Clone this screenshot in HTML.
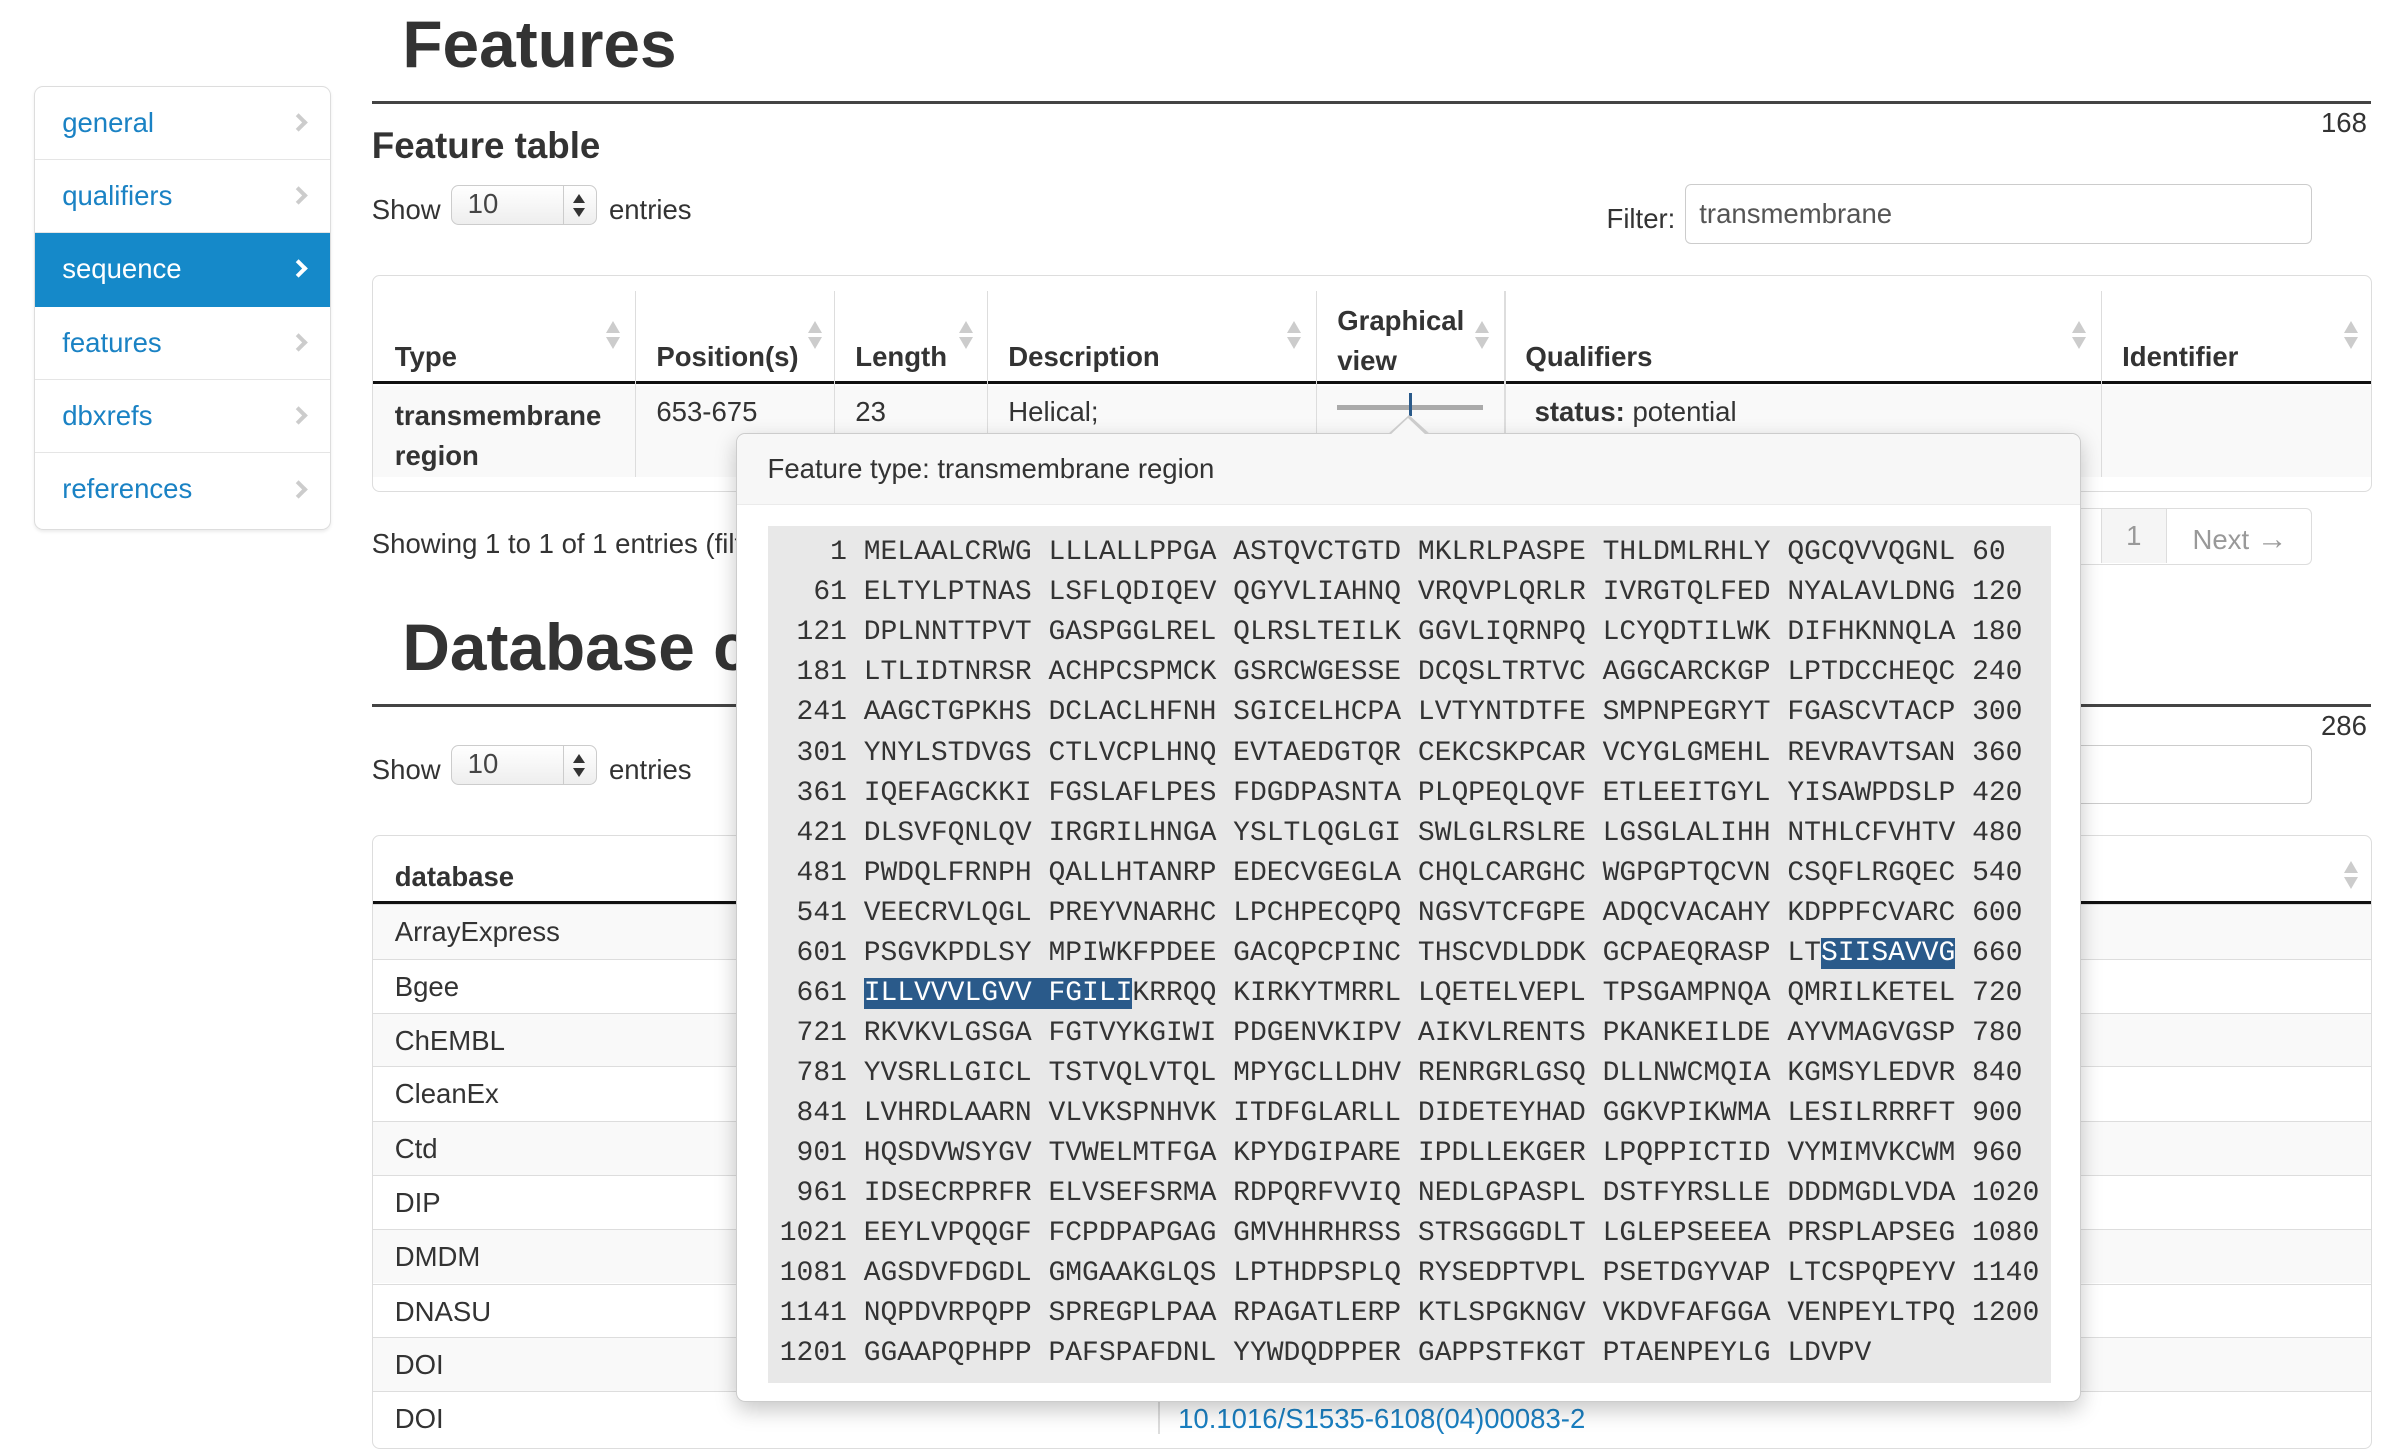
<!DOCTYPE html>
<html><head><meta charset="utf-8"><style>
html,body{margin:0;padding:0;background:#fff;}
body{width:2398px;height:1440px;overflow:hidden;position:relative;}
#z{zoom:1.530;position:absolute;left:0;top:0;width:1568px;height:942px;font-family:"Liberation Sans",Arial,sans-serif;color:#333;font-size:18px;}
.a{position:absolute;}
.nav{left:22px;top:56px;width:193px;height:289px;border:1px solid #ddd;border-radius:6px;box-shadow:0 1px 2px rgba(0,0,0,.08);overflow:hidden;background:#fff;}
.nav div{height:47.3px;border-bottom:1px solid #e5e5e5;position:relative;color:#1a82c4;font-size:18px;line-height:47px;padding-left:18px;}
.nav div:last-child{border-bottom:none}
.nav div.act{background:#1589c9;color:#fff;border-bottom-color:#1589c9}
.nav div:after{content:"";position:absolute;right:16px;top:19px;width:6px;height:6px;border-right:3px solid #ccc;border-top:3px solid #ccc;transform:rotate(45deg);}
.nav div.act:after{border-color:#fff}
h1{margin:0;font-size:43px;font-weight:bold;color:#333;position:absolute;}
.hr{position:absolute;height:2px;background:#444;}
.sel{position:absolute;width:94px;height:25px;border:1px solid #ccc;border-radius:5px;background:linear-gradient(#fff,#eee);font-size:18px;line-height:24px;}
.sel span{position:absolute;left:10px;top:0;color:#444}
.sel i{position:absolute;right:0;top:0;width:21px;height:25px;border-left:1px solid #ccc;}
.sel i:before{content:"";position:absolute;left:6px;top:5px;border:4px solid transparent;border-bottom:6px solid #333;border-top:none;}
.sel i:after{content:"";position:absolute;left:6px;top:14px;border:4px solid transparent;border-top:6px solid #333;border-bottom:none;}
.inp{position:absolute;border:1px solid #ccc;border-radius:4px;background:#fff;}
.box{position:absolute;border:1px solid #ddd;border-radius:5px;background:#fff;}
.th{position:absolute;font-weight:bold;font-size:18px;}
.vl{position:absolute;width:1px;background:#ddd;}
.sort{position:absolute;width:10px;height:20px;}
.sort:before{content:"";position:absolute;left:0;top:0;border:5px solid transparent;border-bottom:8px solid #ccc;border-top:none;}
.sort:after{content:"";position:absolute;left:0;top:10px;border:5px solid transparent;border-top:8px solid #ccc;border-bottom:none;}
.row{position:absolute;left:244px;width:1306px;height:35px;border-top:1px solid #ddd;font-size:18px;line-height:35px;}
.row span{padding-left:14px}
.pop{position:absolute;left:481px;top:283px;width:878px;height:632px;border:1px solid #ccc;border-radius:6px;background:#fff;box-shadow:0 5px 14px rgba(0,0,0,.22);}
.ph{height:46px;background:#f7f7f7;border-bottom:1px solid #ebebeb;border-radius:6px 6px 0 0;font-size:18px;line-height:46px;padding-left:20px;}
pre{position:absolute;left:20px;top:60px;width:839px;height:560px;margin:0;background:#e8e8e8;font-family:"Liberation Mono","Courier New",monospace;font-size:18.3px;line-height:26.15px;color:#333;padding:5px 0 0 8px;box-sizing:border-box;}
pre b{font-weight:normal;background:#2a5a8a;color:#fff;}
</style></head><body><div id="z">

<div class="a nav">
<div>general</div><div>qualifiers</div><div class="act">sequence</div><div>features</div><div>dbxrefs</div><div>references</div>
</div>

<h1 style="left:263px;top:4px;">Features</h1>
<div class="hr" style="left:243px;top:66px;width:1307px;"></div>
<div class="a" style="left:1517px;top:70px;">168</div>
<div class="a" style="left:243px;top:82px;font-size:24px;font-weight:bold;">Feature table</div>
<div class="a" style="left:243px;top:127px;">Show</div>
<div class="sel" style="left:295px;top:121px;"><span>10</span><i></i></div>
<div class="a" style="left:398px;top:127px;">entries</div>
<div class="a" style="left:1050px;top:133px;">Filter:</div>
<div class="inp" style="left:1101px;top:120px;width:409px;height:38px;"><span style="position:absolute;left:9px;top:9px;color:#555">transmembrane</span></div>

<div class="box" style="left:243px;top:180px;width:1306px;height:140px;"></div>
<div class="a" style="left:244px;top:252px;width:1306px;height:60px;background:#f9f9f9;"></div>
<div class="a" style="left:244px;top:249px;width:1306px;height:2px;background:#111;"></div>
<div class="vl" style="left:415px;top:190px;height:122px;"></div>
<div class="vl" style="left:545px;top:190px;height:122px;"></div>
<div class="vl" style="left:645px;top:190px;height:122px;"></div>
<div class="vl" style="left:860px;top:190px;height:122px;"></div>
<div class="vl" style="left:983px;top:190px;height:122px;"></div>
<div class="vl" style="left:1373px;top:190px;height:122px;"></div>
<div class="th" style="left:258px;top:223px;">Type</div>
<div class="th" style="left:429px;top:223px;">Position(s)</div>
<div class="th" style="left:559px;top:223px;">Length</div>
<div class="th" style="left:659px;top:223px;">Description</div>
<div class="th" style="left:874px;top:197px;line-height:26px;">Graphical<br>view</div>
<div class="th" style="left:997px;top:223px;">Qualifiers</div>
<div class="th" style="left:1387px;top:223px;">Identifier</div>
<div class="sort" style="left:396px;top:210px;"></div>
<div class="sort" style="left:528px;top:210px;"></div>
<div class="sort" style="left:627px;top:210px;"></div>
<div class="sort" style="left:841px;top:210px;"></div>
<div class="sort" style="left:964px;top:210px;"></div>
<div class="sort" style="left:1354px;top:210px;"></div>
<div class="sort" style="left:1532px;top:210px;"></div>
<div class="a" style="left:258px;top:259px;font-weight:bold;line-height:26px;">transmembrane<br>region</div>
<div class="a" style="left:429px;top:259px;">653-675</div>
<div class="a" style="left:559px;top:259px;">23</div>
<div class="a" style="left:659px;top:259px;">Helical;</div>
<div class="a" style="left:874px;top:265px;width:95px;height:3px;background:#aaa;"></div>
<div class="a" style="left:921px;top:257px;width:2px;height:15px;background:#2a5a8a;"></div>
<div class="a" style="left:1003px;top:259px;"><b>status:</b> potential</div>

<div class="a" style="left:243px;top:345px;">Showing 1 to 1 of 1 entries (filtered from 168 total entries)</div>
<div class="box" style="left:1330px;top:332px;width:180px;height:36px;border-radius:4px;"></div>
<div class="a" style="left:1373px;top:333px;width:42px;height:35px;background:#f5f5f5;border-left:1px solid #ddd;border-right:1px solid #ddd;color:#999;text-align:center;line-height:35px;">1</div>
<div class="a" style="left:1433px;top:341px;color:#999;">Next <span style="font-size:20px">→</span></div>

<h1 style="left:263px;top:398px;">Database cross-references</h1>
<div class="hr" style="left:243px;top:460px;width:1307px;"></div>
<div class="a" style="left:1517px;top:464px;">286</div>
<div class="a" style="left:243px;top:493px;">Show</div>
<div class="sel" style="left:295px;top:487px;"><span>10</span><i></i></div>
<div class="a" style="left:398px;top:493px;">entries</div>
<div class="inp" style="left:1100px;top:487px;width:410px;height:37px;"></div>

<div class="box" style="left:243px;top:546px;width:1306px;height:400px;"></div>
<div class="th" style="left:258px;top:563px;">database</div>
<div class="sort" style="left:1532px;top:563px;"></div>
<div class="a" style="left:244px;top:589px;width:1306px;height:2px;background:#111;"></div>
<div class="row" style="top:591px;background:#f9f9f9"><span>ArrayExpress</span></div>
<div class="row" style="top:627px;"><span>Bgee</span></div>
<div class="row" style="top:662px;background:#f9f9f9"><span>ChEMBL</span></div>
<div class="row" style="top:697px;"><span>CleanEx</span></div>
<div class="row" style="top:733px;background:#f9f9f9"><span>Ctd</span></div>
<div class="row" style="top:768px;"><span>DIP</span></div>
<div class="row" style="top:803px;background:#f9f9f9"><span>DMDM</span></div>
<div class="row" style="top:839px;"><span>DNASU</span></div>
<div class="row" style="top:874px;background:#f9f9f9"><span>DOI</span></div>
<div class="row" style="top:909px;"><span>DOI</span></div>
<div class="vl" style="left:757px;top:591px;height:346px;"></div>
<div class="a" style="left:770px;top:917px;color:#1a7fc1;">10.1016/S1535-6108(04)00083-2</div>

<div class="pop">
<div class="ph">Feature type: transmembrane region</div>
<pre>   1 MELAALCRWG LLLALLPPGA ASTQVCTGTD MKLRLPASPE THLDMLRHLY QGCQVVQGNL 60
  61 ELTYLPTNAS LSFLQDIQEV QGYVLIAHNQ VRQVPLQRLR IVRGTQLFED NYALAVLDNG 120
 121 DPLNNTTPVT GASPGGLREL QLRSLTEILK GGVLIQRNPQ LCYQDTILWK DIFHKNNQLA 180
 181 LTLIDTNRSR ACHPCSPMCK GSRCWGESSE DCQSLTRTVC AGGCARCKGP LPTDCCHEQC 240
 241 AAGCTGPKHS DCLACLHFNH SGICELHCPA LVTYNTDTFE SMPNPEGRYT FGASCVTACP 300
 301 YNYLSTDVGS CTLVCPLHNQ EVTAEDGTQR CEKCSKPCAR VCYGLGMEHL REVRAVTSAN 360
 361 IQEFAGCKKI FGSLAFLPES FDGDPASNTA PLQPEQLQVF ETLEEITGYL YISAWPDSLP 420
 421 DLSVFQNLQV IRGRILHNGA YSLTLQGLGI SWLGLRSLRE LGSGLALIHH NTHLCFVHTV 480
 481 PWDQLFRNPH QALLHTANRP EDECVGEGLA CHQLCARGHC WGPGPTQCVN CSQFLRGQEC 540
 541 VEECRVLQGL PREYVNARHC LPCHPECQPQ NGSVTCFGPE ADQCVACAHY KDPPFCVARC 600
 601 PSGVKPDLSY MPIWKFPDEE GACQPCPINC THSCVDLDDK GCPAEQRASP LT<b>SIISAVVG</b> 660
 661 <b>ILLVVVLGVV FGILI</b>KRRQQ KIRKYTMRRL LQETELVEPL TPSGAMPNQA QMRILKETEL 720
 721 RKVKVLGSGA FGTVYKGIWI PDGENVKIPV AIKVLRENTS PKANKEILDE AYVMAGVGSP 780
 781 YVSRLLGICL TSTVQLVTQL MPYGCLLDHV RENRGRLGSQ DLLNWCMQIA KGMSYLEDVR 840
 841 LVHRDLAARN VLVKSPNHVK ITDFGLARLL DIDETEYHAD GGKVPIKWMA LESILRRRFT 900
 901 HQSDVWSYGV TVWELMTFGA KPYDGIPARE IPDLLEKGER LPQPPICTID VYMIMVKCWM 960
 961 IDSECRPRFR ELVSEFSRMA RDPQRFVVIQ NEDLGPASPL DSTFYRSLLE DDDMGDLVDA 1020
1021 EEYLVPQQGF FCPDPAPGAG GMVHHRHRSS STRSGGGDLT LGLEPSEEEA PRSPLAPSEG 1080
1081 AGSDVFDGDL GMGAAKGLQS LPTHDPSPLQ RYSEDPTVPL PSETDGYVAP LTCSPQPEYV 1140
1141 NQPDVRPQPP SPREGPLPAA RPAGATLERP KTLSPGKNGV VKDVFAFGGA VENPEYLTPQ 1200
1201 GGAAPQPHPP PAFSPAFDNL YYWDQDPPER GAPPSTFKGT PTAENPEYLG LDVPV</pre>
</div>
<div class="a" style="left:907px;top:271px;width:0;height:0;border-left:14px solid transparent;border-right:14px solid transparent;border-bottom:13px solid #ccc;"></div>
<div class="a" style="left:908px;top:273px;width:0;height:0;border-left:13px solid transparent;border-right:13px solid transparent;border-bottom:12px solid #f7f7f7;"></div>

</div></body></html>
